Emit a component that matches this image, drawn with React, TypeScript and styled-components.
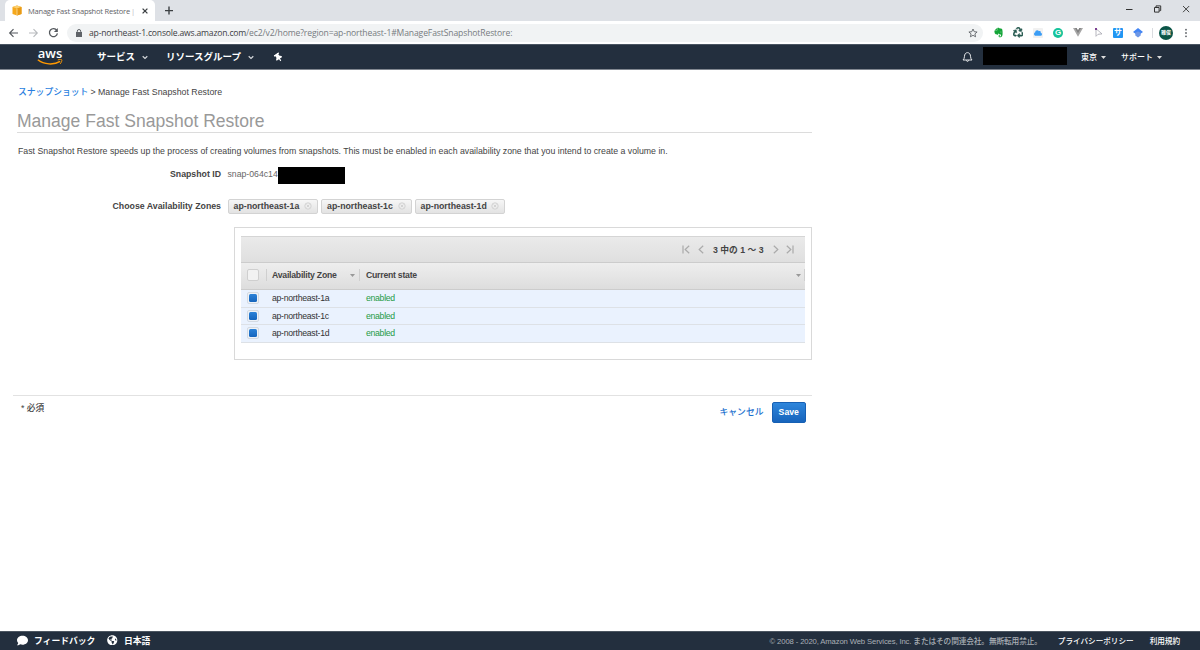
import React from "react";
import styled, { createGlobalStyle } from "styled-components";
import { FaEvernote, FaRecycle, FaCloud, FaThumbtack, FaComment, FaGlobeAmericas } from "react-icons/fa";

const Global = createGlobalStyle`
  * { box-sizing: border-box; }
  html, body { margin: 0; padding: 0; background: #fff; }
  body { font-family: "Liberation Sans", "Noto Sans CJK JP", sans-serif; color: #444; overflow: hidden; }
`;

const Page = styled.div`
  width: 1200px;
  height: 650px;
  display: flex;
  flex-direction: column;
`;

const Text = styled.span<{ $size?: number; $track?: number; $color?: string; $bold?: boolean; $weight?: number; $ml?: number }>`
  font-size: ${(p) => p.$size ?? 9}px;
  letter-spacing: ${(p) => p.$track ?? 0}px;
  color: ${(p) => p.$color ?? "#444"};
  font-weight: ${(p) => p.$weight ?? (p.$bold ? 700 : 400)};
  margin-left: ${(p) => p.$ml ?? 0}px;
  white-space: nowrap;
  flex: none;
`;

const TabStrip = styled.div`
  height: 21px;
  flex: none;
  display: flex;
  background: #dee1e6;
  padding-left: 5px;
`;

const Tab = styled.div`
  width: 150px;
  height: 21px;
  display: flex;
  align-items: center;
  background: #fff;
  border-radius: 5px 5px 0 0;
  padding: 0 6px 0 7px;
  font-family: "Open Sans", "Noto Sans", sans-serif;
`;

const TabTitle = styled.div`
  width: 107px;
  margin-left: 6px;
  display: flex;
`;

const Icon = styled.svg<{ $ml?: number }>`
  display: block;
  flex: none;
  fill: none;
  margin-left: ${(p) => p.$ml ?? 0}px;
`;

const Slot = styled.span<{ $ml?: number; $color?: string; $size?: number; $turn?: number }>`
  display: flex;
  flex: none;
  margin-left: ${(p) => p.$ml ?? 0}px;
  color: ${(p) => p.$color ?? "#fff"};
  font-size: ${(p) => p.$size ?? 11}px;
  transform: rotate(${(p) => p.$turn ?? 0}deg);
`;

const WindowControls = styled.div`
  margin: 0 10px 3px auto;
  display: flex;
  align-items: center;
  gap: 20px;
`;

const Toolbar = styled.div`
  height: 23px;
  flex: none;
  display: flex;
  align-items: center;
  background: #fff;
  padding-left: 8px;
`;

const Address = styled.div`
  width: 916px;
  height: 18px;
  margin-left: 8px;
  padding: 0 5px 0 8px;
  display: flex;
  align-items: center;
  justify-content: space-between;
  background: #f1f3f4;
  border-radius: 9px;
  font-family: "Open Sans", "Noto Sans", sans-serif;
`;

const AddressText = styled.div`
  display: flex;
  align-items: center;
`;

const Extensions = styled.div`
  display: flex;
  align-items: center;
  margin-left: 5px;
`;

const Extension = styled.span`
  width: 20px;
  height: 12px;
  display: flex;
  align-items: center;
  justify-content: center;
`;

const Tile = styled.span<{ $bg: string; $round?: boolean; $size: number; $font: number }>`
  width: ${(p) => p.$size}px;
  height: ${(p) => p.$size}px;
  display: flex;
  align-items: center;
  justify-content: center;
  background: ${(p) => p.$bg};
  border-radius: ${(p) => (p.$round ? "50%" : "1px")};
  color: #fff;
  font: 700 ${(p) => p.$font}px "Liberation Sans", "Noto Sans CJK JP", sans-serif;
  line-height: 1;
  white-space: nowrap;
`;

const Divider = styled.span`
  width: 1px;
  height: 10px;
  margin: 0 6px 0 4px;
  background: #dadce0;
`;

const NavBar = styled.nav`
  height: 26px;
  flex: none;
  display: flex;
  align-items: center;
  background: #232f3e;
  border-top: 1px solid #4a5562;
  border-bottom: 1px solid #818790;
`;

const NavLabel = styled(Text)`
  margin-top: -2px;
`;

const Logo = styled.div`
  width: 26px;
  height: 18px;
  margin-left: 37px;
  display: flex;
  flex-direction: column;
  align-items: center;
  color: #fff;
`;

const LogoWord = styled.span`
  height: 11px;
  font: 600 13px/10px "Open Sans", sans-serif;
`;

const Redacted = styled.span<{ $w: number; $h: number; $ml?: number }>`
  flex: none;
  width: ${(p) => p.$w}px;
  height: ${(p) => p.$h}px;
  margin-left: ${(p) => p.$ml ?? 0}px;
  background: #000;
`;

const NavRedacted = styled(Redacted)`
  margin-bottom: 3px;
`;

const NavRight = styled.div`
  margin-left: auto;
  width: 239px;
  display: flex;
  align-items: center;
`;

const Main = styled.main`
  flex: 1;
  width: 812px;
  padding-left: 18px;
  display: flex;
  flex-direction: column;
`;

const Breadcrumb = styled.div`
  height: 16px;
  margin-top: 14px;
  display: flex;
  align-items: center;
`;

const CrumbLink = styled(Text)`
  margin-top: -2px;
`;

const Title = styled.h1`
  margin: 8px 0 0 -1px;
  height: 25px;
  border-bottom: 1px solid #dcdcdc;
  font-size: 17.55px;
  line-height: 26px;
  font-weight: 400;
  color: #999;
`;

const Intro = styled.p`
  margin: 11px 0 0;
  height: 14px;
  display: flex;
  align-items: center;
`;

const Field = styled.div<{ $mt: number }>`
  display: flex;
  align-items: center;
  height: 18px;
  margin-top: ${(p) => p.$mt}px;
`;

const FieldText = styled.span`
  display: flex;
  width: 50px;
  padding-bottom: 2px;
`;

const Label = styled.span<{ $raise?: boolean }>`
  width: 203px;
  margin-right: 6.5px;
  padding-bottom: ${(p) => (p.$raise ? 2 : 0)}px;
  display: flex;
  justify-content: flex-end;
`;

const Chips = styled.div`
  display: flex;
  gap: 3px;
`;

const Chip = styled.span`
  width: 90.5px;
  height: 15px;
  display: flex;
  align-items: center;
  justify-content: space-between;
  padding: 0 5px;
  border: 1px solid #d3d3d3;
  border-radius: 2px;
  background: linear-gradient(#f6f6f6, #e3e3e3);
`;

const Panel = styled.section`
  width: 578px;
  height: 133px;
  margin: 12px 0 0 216px;
  padding: 8px 6px;
  border: 1px solid #d9d9d9;
`;

const Pager = styled.div`
  height: 27px;
  display: flex;
  align-items: center;
  justify-content: flex-end;
  padding-right: 11px;
  border-top: 1px solid #d5d5d5;
  border-bottom: 1px solid #ccc;
  background: linear-gradient(#eaeaea, #dfdfdf);
`;

const Columns = styled.div`
  height: 27px;
  display: flex;
  align-items: center;
  padding-bottom: 2px;
  background: linear-gradient(#eeeeee, #dddddd);
  border-bottom: 1px solid #ccc;
`;

const Row = styled.div`
  height: 17.5px;
  display: flex;
  align-items: center;
  padding-bottom: 0.5px;
  background: #eaf2fe;
  border-bottom: 1px solid #dde1e6;
`;

const CheckCell = styled.div`
  width: 31px;
  display: flex;
  flex: none;
  padding-left: 6px;
`;

const ZoneCell = styled.div`
  width: 94px;
  display: flex;
  flex: none;
  align-items: center;
  justify-content: space-between;
`;

const StateCell = styled.div`
  flex: 1;
  display: flex;
  align-items: center;
  justify-content: space-between;
`;

const Sorter = styled.span<{ $gap: number; $end: number }>`
  display: flex;
  align-items: center;
  gap: ${(p) => p.$gap}px;
  margin-right: ${(p) => p.$end}px;
`;

const Check = styled.span<{ $on?: boolean }>`
  width: 12px;
  height: 12px;
  flex: none;
  border: 1px solid ${(p) => (p.$on ? "#d3dae2" : "#cfcfcf")};
  border-radius: 2px;
  background: ${(p) => (p.$on ? "#eef2f7" : "#f2f2f2")};
  display: flex;
  align-items: center;
  justify-content: center;

  &::after {
    content: "";
    width: 8px;
    height: 8px;
    border-radius: 1.5px;
    background: ${(p) => (p.$on ? "linear-gradient(#2b82d8, #1565bd)" : "transparent")};
  }
`;

const ColumnLine = styled.span<{ $ml?: number }>`
  width: 1px;
  height: 12px;
  margin-left: ${(p) => p.$ml ?? 0}px;
  background: #cfcfcf;
`;

const Actions = styled.div`
  width: 799px;
  height: 30px;
  margin: 35px 0 0 -5px;
  padding-left: 8px;
  border-top: 1px solid #e2e2e2;
  display: flex;
  align-items: flex-start;
`;

const Required = styled.div`
  padding-top: 3px;
  line-height: 14px;
`;

const Buttons = styled.div`
  margin: 6px 6px 0 auto;
  display: flex;
  align-items: center;
`;

const CancelLink = styled(Text)`
  margin-top: -2px;
`;

const SaveButton = styled.button`
  width: 34.5px;
  height: 21px;
  margin-left: 8px;
  padding: 0 0 1px;
  border: 1px solid #1660b4;
  border-radius: 2px;
  background: linear-gradient(#2e86dc, #1764bc);
  color: #fff;
  font: 700 8.7px "Liberation Sans", sans-serif;
`;

const Footer = styled.footer`
  height: 19px;
  flex: none;
  display: flex;
  align-items: center;
  background: #232f3e;
  border-top: 1px solid #4c5661;
  padding: 0 20px 2px 17px;
`;

const FooterRight = styled.div`
  margin-left: auto;
  display: flex;
  align-items: center;
`;

const Caret = ({ ml = 0, color = "#999" }: { ml?: number; color?: string }) => (
  <Icon $ml={ml} width={5} height={3} viewBox="0 0 5 3"><path d="M0 0h5L2.5 3z" fill={color} /></Icon>
);

const Chevron = ({ ml }: { ml: number }) => (
  <Icon $ml={ml} width={6} height={5} viewBox="0 0 6 5"><path d="M.7 1.2 3 3.4 5.3 1.2" stroke="#d5d8dc" strokeWidth={1.2} /></Icon>
);

const PageArrow = ({ ml, left, end }: { ml: number; left?: boolean; end?: boolean }) => (
  <Icon $ml={ml} width={8} height={9} viewBox="0 0 8 9" stroke="#aaa" strokeWidth={1.2}>
    <g transform={left ? "matrix(-1 0 0 1 8 0)" : undefined}>
      <path d={end ? "M.8.8 4.8 4.5.8 8.2M7 .5v8" : "M1.8.8 5.8 4.5 1.8 8.2"} />
    </g>
  </Icon>
);

const zones = [
  { name: "ap-northeast-1a", state: "enabled" },
  { name: "ap-northeast-1c", state: "enabled" },
  { name: "ap-northeast-1d", state: "enabled" },
];

export default function App() {
  return (
    <Page>
      <Global />
      <TabStrip>
        <Tab>
          <Icon width={10} height={11} viewBox="0 0 10 11">
            <path d="M5 .5 9.5 2v7L5 10.5.5 9V2z" fill="#f5a81c" />
            <path d="M.5 2 5 3.5 9.5 2 5 .5z" fill="#fbcf70" />
            <path d="M5 3.5v7L9.5 9V2z" fill="#e79a16" />
            <path d="M5 3.6v6.8" stroke="#fff0cc" strokeWidth={0.6} />
          </Icon>
          <TabTitle>
            <Text $size={7.5} $track={-0.21} $color="#5f6368">Manage Fast Snapshot Restore</Text>
            <Text $ml={1} $size={7.5} $color="#b5b8bb">|</Text>
          </TabTitle>
          <Icon $ml={7} width={6} height={6} viewBox="0 0 6 6" stroke="#3c4043" strokeWidth={1.3}><path d="m.6.6 4.8 4.8m0-4.8L.6 5.4" /></Icon>
        </Tab>
        <Icon $ml={10} width={8} height={21} viewBox="0 0 8 21" stroke="#3c4043" strokeWidth={1.4}><path d="M0 10.6h8M4 6.6v8" /></Icon>
        <WindowControls>
          <Icon width={8} height={8} viewBox="0 0 8 8" stroke="#333"><path d="M1 4.5h6.5" /></Icon>
          <Icon width={9} height={8} viewBox="0 0 9 8" stroke="#333"><path d="M1.5 2.5h4.6v4.6H1.5zM3 2V.9h4.7v4.7H6.5" /></Icon>
          <Icon width={8} height={8} viewBox="0 0 8 8" stroke="#333" strokeWidth={0.9}><path d="m1 1 6.2 6.2m0-6.2L1 7.2" /></Icon>
        </WindowControls>
      </TabStrip>

      <Toolbar>
        <Icon width={11} height={10} viewBox="0 0 11 10" stroke="#55595e" strokeWidth={1.2}><path d="M10 5H2M5.5 1.2 1.7 5l3.8 3.8" /></Icon>
        <Icon $ml={9} width={11} height={10} viewBox="0 0 11 10" stroke="#b7babd" strokeWidth={1.1}><path d="M1 5h8M5.5 1.2 9.3 5 5.5 8.8" /></Icon>
        <Icon $ml={9} width={11} height={11} viewBox="0 0 11 11"><path d="M8.8 3.4A4 4 0 1 0 9.4 6.4" stroke="#55595e" strokeWidth={1.3} /><path d="M9.8 1v4H5.9z" fill="#55595e" /></Icon>
        <Address>
          <AddressText>
            <Icon $ml={1} width={6} height={8} viewBox="0 0 6 8"><path d="M0 3h6v5H0z" fill="#5f6368" /><path d="M1.3 3.3V2.2a1.7 1.7 0 0 1 3.4 0v1.1" stroke="#5f6368" /></Icon>
            <Text $ml={7} $size={8.6} $track={-0.19} $color="#3c4043">ap-northeast-1.console.aws.amazon.com</Text>
            <Text $size={8.6} $track={-0.13} $color="#777b80">/ec2/v2/home?region=ap-northeast-1#ManageFastSnapshotRestore:</Text>
          </AddressText>
          <Icon width={10} height={10} viewBox="0 0 10 10"><path d="m5 1 1.2 2.7 2.9.3-2.2 1.9.7 2.9L5 7.3 2.4 8.8l.7-2.9L.9 4l2.9-.3z" stroke="#5f6368" strokeWidth={0.9} /></Icon>
        </Address>
        <Extensions>
          <Extension><Slot $color="#14a538" $size={11}><FaEvernote /></Slot></Extension>
          <Extension><Slot $color="#285b52" $size={10.5}><FaRecycle stroke="#285b52" strokeWidth={24} /></Slot></Extension>
          <Extension><Tile $bg="#f1f1f1" $size={10} $font={8}><Slot $color="#3b9df5" $size={8}><FaCloud /></Slot></Tile></Extension>
          <Extension><Tile $bg="#15c39a" $round $size={10} $font={8}>G</Tile></Extension>
          <Extension><Icon width={10} height={9} viewBox="0 0 10 9"><path d="M0 0h3.6L5 2.5 6.4 0H10L5 8.8z" fill="#a6a6a6" /><path d="M2 0h1.6L5 2.5 6.4 0H8L5 5.3z" fill="#808080" /></Icon></Extension>
          <Extension><Icon width={9} height={9} viewBox="0 0 9 9"><path d="M2 .7v7.6l2-2 4-.4z" stroke="#a4a4ae" strokeWidth={0.8} /><path d="M1 0h2v2H1z" fill="#7b3f91" /></Icon></Extension>
          <Extension><Tile $bg="#2196f3" $size={10} $font={8}>サ</Tile></Extension>
          <Extension><Icon width={10} height={10} viewBox="0 0 10 10"><path d="M5 0 10 4 5 7.6 0 4z" fill="#4285f4" /><path d="M2.3 4.8 5 3.4 7.7 4.8v2.8L5 9.6 2.3 7.6z" fill="#6d97e6" /></Icon></Extension>
          <Divider />
          <Tile $bg="#0b5547" $round $size={14} $font={5}>雅俊</Tile>
          <Icon $ml={12} width={2} height={10} viewBox="0 0 2 10"><g fill="#5f6368"><circle cx="1" cy="1.7" r=".9" /><circle cx="1" cy="5" r=".9" /><circle cx="1" cy="8.3" r=".9" /></g></Icon>
        </Extensions>
      </Toolbar>

      <NavBar>
        <Logo>
          <LogoWord>aws</LogoWord>
          <Icon width={26} height={7} viewBox="0 0 26 7"><path d="M.8.8C7 5.8 17 6.2 23.2 2.4" stroke="#f90" strokeWidth={1.4} /><path d="M20.8 1c2-.8 3.7-.7 4-.2s-.3 2.6-1.5 4" stroke="#f90" strokeWidth={1} /></Icon>
        </Logo>
        <NavLabel $ml={34} $size={9.5} $bold $color="#fff">サービス</NavLabel>
        <Chevron ml={7} />
        <NavLabel $ml={18} $size={9.5} $bold $color="#fff">リソースグループ</NavLabel>
        <Chevron ml={7} />
        <Slot $ml={20} $size={9} $turn={-35}><FaThumbtack /></Slot>
        <NavRight>
          <Icon $ml={1} width={11} height={12} viewBox="0 0 11 12" stroke="#e6e8ea" strokeWidth={1}><path d="M1 9C3 7.4 2 4 3.3 2.7 4.3 1.3 6.7 1.3 7.7 2.7 9 4 8 7.4 10 9zM4.4 9.3c.2 1.5 2 1.5 2.2 0" /></Icon>
          <NavRedacted $w={84} $h={18} $ml={10} />
          <NavLabel $ml={14} $size={8} $weight={500} $color="#fff">東京</NavLabel><Caret ml={4} color="#ddd" />
          <NavLabel $ml={15} $size={8} $weight={500} $color="#fff">サポート</NavLabel><Caret ml={4} color="#ddd" />
        </NavRight>
      </NavBar>

      <Main>
        <Breadcrumb>
          <CrumbLink $size={8.8} $weight={500} $color="#2a7fe0">スナップショット</CrumbLink>
          <Text $ml={2} $size={8.8}>&gt; Manage Fast Snapshot Restore</Text>
        </Breadcrumb>
        <Title>Manage Fast Snapshot Restore</Title>
        <Intro>
          <Text $size={8.75}>Fast Snapshot Restore speeds up the process of creating volumes from snapshots. This must be enabled in each availability zone that you intend to create a volume in.</Text>
        </Intro>
        <Field $mt={8}>
          <Label $raise><Text $bold $size={8.75}>Snapshot ID</Text></Label>
          <FieldText><Text $size={8.7} $color="#666">snap-064c14</Text></FieldText>
          <Redacted $w={67} $h={17} />
        </Field>
        <Field $mt={13}>
          <Label><Text $bold $size={8.78}>Choose Availability Zones</Text></Label>
          <Chips>
            {zones.map((z) => (
              <Chip key={z.name}>
                <Text $bold $size={8.78}>{z.name}</Text>
                <Icon width={8} height={8} viewBox="0 0 8 8" stroke="#cfcfcf" strokeWidth={0.9}><circle cx="4" cy="4" r="3.2" fill="#eee" /><path d="m2.6 2.6 2.8 2.8m0-2.8L2.6 5.4" /></Icon>
              </Chip>
            ))}
          </Chips>
        </Field>
        <Panel>
          <Pager>
            <PageArrow ml={0} left end />
            <PageArrow ml={7} left />
            <Text $ml={8} $bold $size={8.75}>3 中の 1 ～ 3</Text>
            <PageArrow ml={8.5} />
            <PageArrow ml={6} end />
          </Pager>
          <Columns>
            <CheckCell><Check /><ColumnLine $ml={7} /></CheckCell>
            <ZoneCell>
              <Text $bold $size={8.7} $track={-0.24}>Availability Zone</Text>
              <Sorter $gap={4} $end={6}><Caret /><ColumnLine /></Sorter>
            </ZoneCell>
            <StateCell>
              <Text $bold $size={8.7} $track={-0.24}>Current state</Text>
              <Sorter $gap={3} $end={0}><Caret /><ColumnLine /></Sorter>
            </StateCell>
          </Columns>
          {zones.map((z) => (
            <Row key={z.name}>
              <CheckCell><Check $on /></CheckCell>
              <ZoneCell><Text $size={8.7} $track={-0.27} $color="#333">{z.name}</Text></ZoneCell>
              <StateCell><Text $size={8.7} $track={-0.3} $color="#259b46">{z.state}</Text></StateCell>
            </Row>
          ))}
        </Panel>
        <Actions>
          <Required><Text $size={8.7} $weight={500}>* 必須</Text></Required>
          <Buttons>
            <CancelLink $size={8.8} $weight={500} $color="#1a6fce">キャンセル</CancelLink>
            <SaveButton>Save</SaveButton>
          </Buttons>
        </Actions>
      </Main>

      <Footer>
        <Slot $size={11}><FaComment /></Slot>
        <Text $ml={6} $size={8.8} $bold $color="#fff">フィードバック</Text>
        <Slot $ml={12} $size={10.5}><FaGlobeAmericas /></Slot>
        <Text $ml={6} $size={8.8} $bold $color="#fff">日本語</Text>
        <FooterRight>
          <Text $size={7.7} $track={-0.13} $weight={500} $color="#aab0b6">© 2008 - 2020, Amazon Web Services, Inc. またはその関連会社。無断転用禁止。</Text>
          <Text $ml={16} $size={7.6} $weight={500} $color="#fff">プライバシーポリシー</Text>
          <Text $ml={16} $size={7.6} $weight={500} $color="#fff">利用規約</Text>
        </FooterRight>
      </Footer>
    </Page>
  );
}
